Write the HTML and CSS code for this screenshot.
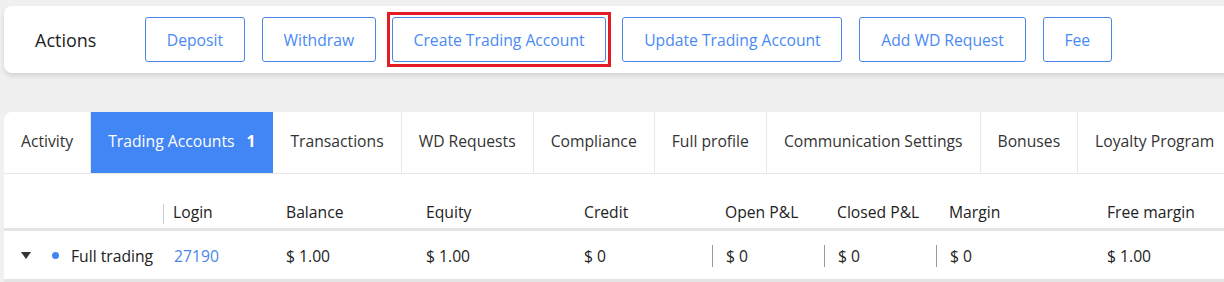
FILE: index.html
```html
<!DOCTYPE html>
<html lang="en">
<head>
  <meta charset="UTF-8" />
  <title>Client Accounts</title>
  <link rel="stylesheet" href="styles.css">
</head>
<body>
  <!-- Actions bar -->
  <div class="card actions">
    <span class="actions-title">Actions</span>
    <button class="btn">Deposit</button>
    <button class="btn">Withdraw</button>
    <span class="marked"><button class="btn">Create Trading Account</button></span>
    <button class="btn">Update Trading Account</button>
    <button class="btn">Add WD Request</button>
    <button class="btn">Fee</button>
  </div>

  <!-- Tabs + accounts table -->
  <div class="card panel">
    <div class="tabs">
      <div class="tab">Activity</div>
      <div class="tab active">Trading Accounts <b class="count">1</b></div>
      <div class="tab">Transactions</div>
      <div class="tab">WD Requests</div>
      <div class="tab">Compliance</div>
      <div class="tab">Full profile</div>
      <div class="tab">Communication Settings</div>
      <div class="tab">Bonuses</div>
      <div class="tab">Loyalty Program</div>
    </div>

    <div class="grid head">
      <div class="cell"></div>
      <div class="cell login-head">Login</div>
      <div class="cell">Balance</div>
      <div class="cell">Equity</div>
      <div class="cell">Credit</div>
      <div class="cell">Open P&amp;L</div>
      <div class="cell">Closed P&amp;L</div>
      <div class="cell">Margin</div>
      <div class="cell">Free margin</div>
    </div>

    <div class="grid row">
      <div class="cell type">
        <span class="caret"></span>
        <span class="dot"></span>
        Full trading
      </div>
      <div class="cell login"><a href="#">27190</a></div>
      <div class="cell">$ 1.00</div>
      <div class="cell">$ 1.00</div>
      <div class="cell">$ 0</div>
      <div class="cell split"><span>$ 0</span></div>
      <div class="cell split"><span>$ 0</span></div>
      <div class="cell split"><span>$ 0</span></div>
      <div class="cell">$ 1.00</div>
    </div>
  </div>
</body>
</html>
```

FILE: styles.css
```css
body {
  margin: 0;
  padding: 6px 0 0 4px;
  background-color: #f0f0f0;
  font-family: "Open Sans", "Liberation Sans", sans-serif;
  color: #222;
  overflow: hidden;
}
.card {
  background: white;
  margin-right: -20px;
  border-radius: 8px 0 0 8px;
}
.actions {
  display: flex;
  align-items: center;
  gap: 17px;
  height: 67px;
  padding-left: 31px;
  box-shadow: 0 3px 5px rgba(0, 0, 0, 0.12);
}
.actions-title {
  width: 93px;
  font-size: 18px;
  color: #222;
}
.btn {
  height: 45px;
  padding: 0 20.75px;
  background: white;
  border: 1px solid #4a86e8;
  border-radius: 3px;
  color: #4a8af4;
  font-family: inherit;
  font-size: 15.7px;
}
.marked {
  display: flex;
  margin: 0 -6px;
  padding: 2px;
  border: 3px solid #e31b23;
}
.panel {
  margin-top: 39px;
  border-radius: 8px 0 0 0;
}
.tabs {
  display: flex;
  height: 61px;
  border-bottom: 1px solid #e8e8e8;
}
.tab {
  display: flex;
  align-items: center;
  padding: 0 17px 3px;
  border-right: 1px solid #e8e8e8;
  font-size: 15.7px;
  color: #333;
  white-space: nowrap;
}
.tab.active {
  background: #4285f4;
  color: white;
  border-right-color: #4285f4;
}
.count {
  margin-left: 12px;
  font-weight: 700;
}
.grid {
  display: grid;
  grid-template-columns: 159px 110px 140px 158px 141px 112px 112px 158px 1fr;
  font-size: 15.7px;
}
.head {
  height: 54px;
  align-items: end;
  border-bottom: 3px solid #e4e4e4;
  color: #222;
}
.head .cell {
  padding: 0 0 6px 13px;
  line-height: 20px;
}
.head .login-head {
  padding-left: 9px;
  border-left: 1px solid #ccc;
  line-height: 17px;
  padding-bottom: 3px;
  margin-bottom: 4px;
}
.row {
  height: 47px;
  padding-top: 1px;
  align-items: center;
  border-bottom: 3px solid #e4e4e4;
}
.row .cell {
  padding-left: 13px;
}
.row .type {
  display: flex;
  align-items: center;
  padding-left: 17px;
}
.caret {
  width: 0;
  height: 0;
  border-left: 5px solid transparent;
  border-right: 5px solid transparent;
  border-top: 7px solid #333;
  margin-right: 21px;
}
.dot {
  width: 7px;
  height: 7px;
  border-radius: 50%;
  background: #4285f4;
  margin-right: 12px;
}
.row .login {
  padding-left: 11px;
}
.login a {
  color: #4a86e8;
  text-decoration: none;
}
.row .split {
  padding-left: 0;
}
.split span {
  display: flex;
  align-items: center;
  height: 22px;
  padding-left: 13px;
  border-left: 1px solid #999;
}
```
